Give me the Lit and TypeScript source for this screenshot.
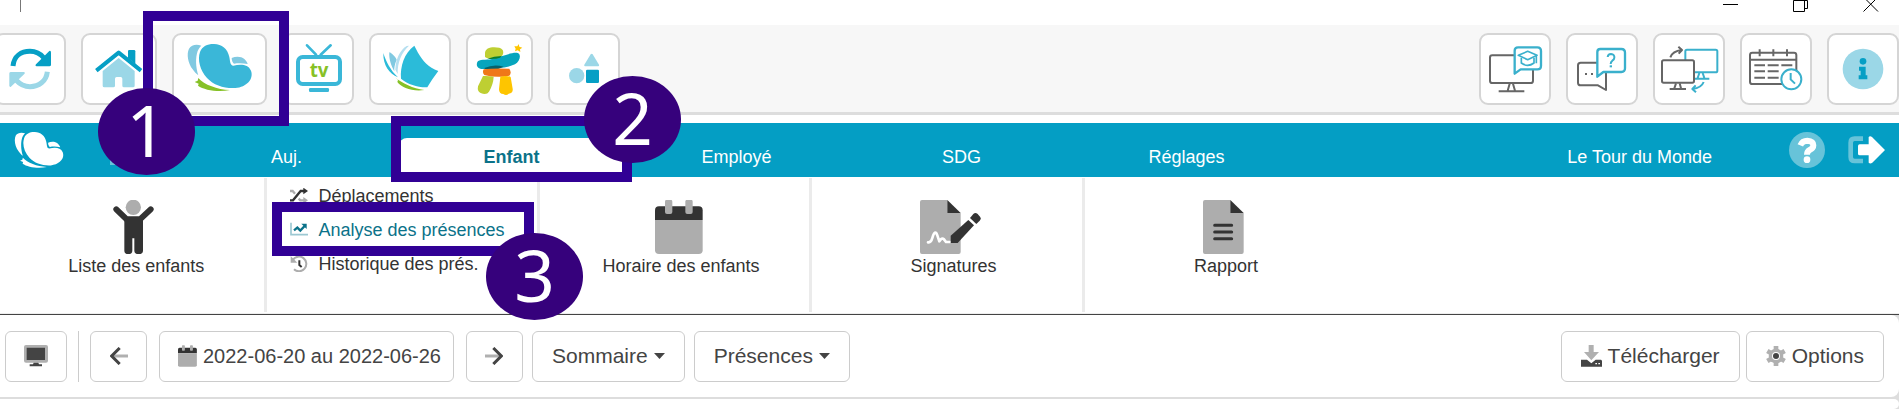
import { LitElement, html, svg, css, type TemplateResult } from "lit";
import { customElement } from "lit/decorators.js";

interface Tool {
  label: string;
  width: number;
  box: string;
  art: TemplateResult;
}

const butterfly = (left: string, body: string, small: string, tail: string) => svg`
  <path fill=${left} d="M604 137C590 132 574 134 567 146C559 162 564 189 578 208C583 215 589 222 595 226C587 202 586 173 593 153C596 146 600 141 604 137Z"/>
  <path fill=${small} d="M695 174C708 168 724 169 733 177C738 182 742 187 743 192C728 189 714 189 702 191C698 188 695 182 695 174Z"/>
  <path fill=${body} d="M640 132C664 131 683 146 688 171C691 186 690 196 700 197C722 192 744 192 753 212C762 237 740 261 706 264C674 266 641 256 621 234C600 211 592 180 600 156C607 139 622 132 640 132Z"/>
  <path fill=${tail} d="M595 234C613 254 651 269 690 270C655 278 613 270 594 257L596 251L584 246L593 242Z"/>`;

const calendarMark = svg`
  <path fill="#333" d="M226 150V121Q226 109 238 109H357Q369 109 369 121V150Z"/>
  <path fill="#adadad" d="M226 150H369V241Q369 252 357 252H238Q226 252 226 241Z"/>
  <rect x="256" y="89" width="22" height="43" rx="6" fill="#adadad"/>
  <rect x="317" y="89" width="22" height="43" rx="6" fill="#adadad"/>`;

const leftTools: Tool[] = [
  {
    label: "Actualiser", width: 72, box: "-12 105 204 204",
    art: svg`
      <path fill="none" stroke="#069fc5" stroke-width="15" d="M39 198C42 168 64 154 90 154C109 154 122 162 132 174"/>
      <path fill="#069fc5" d="M148 153Q153 151 153 158V194Q153 199 148 199H110Q104 198 108 193Z"/>
      <path fill="none" stroke="#9bd7e7" stroke-width="15" d="M142 215C139 244 116 260 90 260C70 260 58 251 48 240"/>
      <path fill="#9bd7e7" d="M32 261Q28 262 28 256V220Q28 216 33 216H71Q77 217 73 222Z"/>`,
  },
  {
    label: "Accueil", width: 76, box: "249 105 216 204",
    art: svg`
      <path fill="#069fc5" d="M384 153Q384 150 388 150H402Q406 150 406 154V192L384 174Z"/>
      <path fill="none" stroke="#069fc5" stroke-width="12" stroke-linejoin="round" d="M289 212L356 158L423 212"/>
      <path fill="#9bd7e7" d="M308 213L356 174L404 213V257Q404 262 399 262H372Q367 262 367 257V236Q367 231 362 231H350Q345 231 345 236V257Q345 262 340 262H313Q308 262 308 257Z"/>`,
  },
  {
    label: "Enfants", width: 95, box: "522 105 273 204",
    art: butterfly("#80c9e1", "#3ab7d8", "#80c9e1", "#86c127"),
  },
  {
    label: "Télé", width: 72, box: "12 105 204 204",
    art: svg`
      <path fill="none" stroke="#3ab7d8" stroke-width="8" stroke-linecap="round" d="M81 136L108 164M152 136L122 164"/>
      <rect x="54" y="171" width="126" height="81" rx="14" fill="#fff" stroke="#3ab7d8" stroke-width="12"/>
      <rect x="87" y="264" width="60" height="12" rx="4" fill="#3ab7d8"/>
      <text x="117" y="231" text-anchor="middle" class="tv">tv</text>`,
  },
  {
    label: "Journal", width: 82, box: "273 105 234 204",
    art: svg`
      <path fill="#2bbbd9" d="M403 137L414 158C427 181 445 202 475 213C461 231 451 247 442 262C412 263 385 253 363 236C360 199 373 158 403 137Z"/>
      <path fill="#b5dff0" d="M387 137C364 158 352 188 353 222L346 209C347 176 361 149 380 138Z"/>
      <path fill="#80c9e1" d="M328 157C335 159 345 169 350 179C344 193 342 205 343 214C334 198 326 177 328 157Z"/>
      <path fill="#2bbbd9" d="M310 159C317 182 331 211 354 232C328 221 309 196 310 159Z"/>
      <path fill="#86c127" d="M344 231C367 251 399 265 433 270C397 275 364 263 352 246L354 240Z"/>`,
  },
  {
    label: "Inukshuk", width: 67, box: "564 105 189 204",
    art: svg`
      <path fill="#becf32" d="M615 159C615 142 638 139 658 143C673 147 673 163 662 171C643 177 624 177 615 171Z"/>
      <path fill="#06a5bd" d="M592 186C597 177 617 181 636 177C666 170 694 156 713 159C725 163 720 185 705 193C682 204 650 204 611 207C594 208 587 198 592 186Z"/>
      <path fill="#05616a" d="M613 204Q642 191 671 200L655 207H615Z"/>
      <path fill="#087d32" d="M622 176Q642 169 665 168L660 173Q642 179 622 176Z"/>
      <path fill="#ef7719" d="M611 208Q640 204 688 206Q696 218 688 227Q650 235 613 225Q606 218 611 208Z"/>
      <path fill="#becf32" d="M609 228Q625 227 641 230Q640 253 627 275Q620 286 602 279Q591 275 594 259Z"/>
      <path fill="#fec500" d="M661 230Q680 225 692 231L698 266Q700 280 686 281Q679 288 670 282Q657 282 657 268Z"/>
      <path fill="#fec500" d="M716 132L718 140L727 143L720 148L721 156L713 151L705 154L707 146L703 139L712 139Z"/>`,
  },
  {
    label: "Activités", width: 72, box: "810 105 204 204",
    art: svg`
      <path fill="#9bd7e7" d="M932 163Q935 159 938 163L957 194Q959 199 954 199H916Q911 199 913 194Z"/>
      <circle cx="890" cy="227" r="23" fill="#9bd7e7"/>
      <rect x="918" y="209" width="39" height="40" rx="4" fill="#069fc5"/>`,
  },
];

const rightTools: Tool[] = [
  {
    label: "Formation", width: 72, box: "63 105 204 204",
    art: svg`
      <g fill="none" stroke="#666" stroke-width="6">
        <rect x="90" y="166" width="129" height="83" rx="7"/>
        <path d="M149 251L143 272M159 251L165 272M116 274H193"/>
      </g>
      <g fill="#fff" stroke="#3ab0cc" stroke-width="7" stroke-linejoin="round">
        <path d="M174 142H232Q243 142 243 153V197Q243 208 232 208H182L164 221V152Q164 142 174 142Z"/>
        <g stroke-width="5"><path d="M184 173V189Q203 203 222 189V173M229 168V190"/><path d="M175 166L203 154L231 166L203 179Z"/></g>
      </g>`,
  },
  {
    label: "Questions", width: 72, box: "324 105 204 204",
    art: svg`
      <path fill="#fff" stroke="#666" stroke-width="6" stroke-linejoin="round" d="M362 188H438V270L414 256H362Q354 256 354 248V196Q354 188 362 188Z"/>
      <path fill="#666" d="M375 219h6v6h-6zM393 219h6v6h-6z"/>
      <path fill="#fff" stroke="#3ab0cc" stroke-width="7" stroke-linejoin="round" d="M421 147H484Q495 147 495 158V205Q495 216 484 216H430L412 230V156Q412 147 421 147Z"/>
      <path fill="none" stroke="#3ab0cc" stroke-width="6" d="M443 171Q444 162 453 162Q464 163 463 173Q463 178 457 182Q452 186 452 192"/>
      <rect x="449" y="196" width="7" height="6" fill="#3ab0cc"/>`,
  },
  {
    label: "Prise en main à distance", width: 72, box: "585 105 204 204",
    art: svg`
      <g fill="none" stroke="#3ab0cc" stroke-width="6" stroke-linejoin="round">
        <rect x="676" y="149" width="96" height="68" rx="5"/>
        <path d="M718 219L713 234M728 219L733 234M702 236H748"/>
        <path d="M731 246Q724 264 698 267M707 256L697 267L708 277"/>
      </g>
      <g fill="none" stroke="#666" stroke-width="6" stroke-linejoin="round">
        <rect x="606" y="181" width="96" height="67" rx="5" fill="#fff"/>
        <path d="M648 250L643 265M659 250L663 265M629 267H678"/>
        <path d="M631 172Q638 153 665 150M655 140L666 150L656 161"/>
      </g>`,
  },
  {
    label: "Horaire", width: 72, box: "846 105 204 204",
    art: svg`
      <g fill="none" stroke="#666" stroke-width="6">
        <rect x="870" y="158" width="139" height="94" rx="7"/>
        <path d="M871 179H1009M899 148V169M940 148V169M981 148V169"/>
        <path d="M883 196H915M923 196H956M964 196H997M883 214H915M923 214H956M883 233H915M923 233H956"/>
      </g>
      <circle cx="994" cy="238" r="30" fill="#fff" stroke="#3ab0cc" stroke-width="6"/>
      <path fill="none" stroke="#3ab0cc" stroke-width="6" d="M992 219V238L1005 251"/>`,
  },
  {
    label: "Information", width: 72, box: "1107 105 204 204",
    art: svg`
      <circle cx="1209" cy="207" r="61" fill="#9bd7e7"/>
      <circle cx="1209" cy="184" r="10" fill="#069fc5"/>
      <path fill="#069fc5" d="M1197 200H1217V226H1222V238H1196V226H1202V212H1197Z"/>`,
  },
];

const page = svg`
  <path fill="#adadad" d="M6 0H82V39H122V156Q122 162 116 162H6Q0 162 0 156V6Q0 0 6 0Z"/>
  <path fill="#333" d="M82 0L122 39H82Z"/>`;

const person = svg`
  <circle cx="402" cy="112" r="23" fill="#adadad"/>
  <path fill="none" stroke="#333" stroke-width="18" stroke-linecap="round" stroke-linejoin="round" d="M351 118L382 148H422L454 118"/>
  <path fill="#333" d="M375 141H431V242Q431 252 418 252Q405 252 405 242V205H399V242Q399 252 387 252Q375 252 375 242Z"/>`;

const shuffle = svg`
  <path fill="none" stroke="#adadad" stroke-width="7" d="M0 9H8L15 17M26 32L31 37H42"/>
  <path fill="#adadad" d="M40 27L54 37L40 47Z"/>
  <path fill="none" stroke="#333" stroke-width="7" d="M0 37H9L32 9H42"/>
  <path fill="#333" d="M40 -1L54 9L40 19Z"/>`;

const chart = svg`
  <path fill="none" stroke="#9cc8d2" stroke-width="5" d="M3 2V38H54"/>
  <path fill="none" stroke="#0b7289" stroke-width="7" d="M12 25L22 17L31 26L44 12"/>
  <path fill="#0b7289" d="M34 5H50V21Z"/>`;

const historyMark = svg`
  <path fill="none" stroke="#adadad" stroke-width="6" d="M9 11A22 22 0 1 1 12 40"/>
  <path fill="#adadad" d="M2 0V20H22Z"/>
  <path fill="none" stroke="#333" stroke-width="6" d="M28 13V27L35 33"/>`;

const caret = html`<svg class="caret" viewBox="0 0 11 6" aria-hidden="true"><path fill="#444" d="M0 0H11L5.5 6Z"/></svg>`;

@customElement("app-root")
export class AppRoot extends LitElement {
  static styles = css`
    :host {
      display: block;
      position: relative;
      overflow: hidden;
      background: #fff;
      color: #333;
      font-family: "Liberation Sans", Arial, sans-serif;
      font-size: 18px;
    }
    * { box-sizing: border-box; }
    svg { display: block; flex: none; }
    a { color: inherit; text-decoration: none; }
    button { font: inherit; color: inherit; background: #fff; cursor: pointer; padding: 0; margin: 0; }

    .titlebar { display: flex; height: 25px; padding-left: 20px; padding-right: 20px; align-items: flex-start; }
    .cursor { width: 1px; height: 12px; background: #777; }
    .window-actions { display: flex; gap: 54px; margin-left: auto; }
    .window-actions button { border: 0; width: 16px; height: 13px; }

    .tools { display: flex; justify-content: space-between; height: 90px; padding-top: 8px; background: #f7f7f7; border-bottom: 3px solid #ddd; }
    .group { display: flex; gap: 15px; }
    .group.start { margin-left: -6px; }
    .tool { height: 72px; border: 2px solid #d5d5d5; border-radius: 9px; overflow: hidden; }
    .tv { font: bold 56px "Open Sans", sans-serif; fill: #86c127; }

    .nav { display: flex; align-items: flex-end; height: 54px; margin-top: 8px; background: #049ec4; color: #fff; }
    .logo { align-self: center; width: 64px; padding-left: 14px; }
    .tab { width: 225px; line-height: 38px; height: 39px; text-align: center; border-radius: 8px 8px 0 0; }
    .tab.home { width: 110px; display: flex; justify-content: center; padding-top: 10px; }
    .tab.active { background: #fff; color: #0b7289; font-weight: bold; }
    .site { margin-left: auto; margin-right: 77px; line-height: 38px; height: 39px; }
    .nav-actions { align-self: center; display: flex; align-items: center; gap: 23px; padding-right: 14px; }

    .ribbon { display: grid; grid-template-columns: repeat(7, 1fr); margin-right: -8px; height: 137px; padding-top: 1px; padding-bottom: 1px; border-bottom: 1px solid #eee; }
    .cell { margin-right: 5px; padding-left: 8px; border-right: 3px solid #ebebeb; display: flex; flex-direction: column; }
    .cell:last-child { border-right-color: transparent; }
    .big { display: flex; flex-direction: column; align-items: center; gap: 2px; padding-top: 22px; line-height: 20px; }
    .big svg { margin-right: 5px; }
    .entry { display: flex; align-items: center; gap: 9px; height: 34px; padding-left: 10px; }
    .entries { padding-top: 1px; }
    .entry.current { color: #0b7289; }

    .panels { background: #ddd; border-top: 1px solid #444; }
    .panel { background: #fff; border-radius: 0 8px 8px 0; }
    .bar { display: flex; align-items: center; height: 82px; margin-bottom: 2px; padding: 0 15px 0 5px; font-size: 20px; color: #444; }
    .btn { display: flex; align-items: center; justify-content: center; gap: 6px; height: 51px; border: 1px solid #ccc; border-radius: 6px; padding: 0 19px; }
    .btn.square { width: 57px; padding: 0; }
    .btn.screen { width: 62px; padding: 0; }
    .btn.menu { font-size: 21px; }
    .rule { width: 1px; height: 51px; background: #ccc; margin: 0 11px; }
    .btn.dates { margin: 0 12px; padding: 0 12px 0 18px; }
    .menus { display: flex; gap: 9px; margin-left: 9px; }
    .exports { display: flex; gap: 6px; margin-left: auto; }
    .caret { width: 11px; height: 6px; }
    .content { height: 10px; }

    .frame { position: absolute; border: 10px solid #310095; pointer-events: none; }
    .frame.one { left: 143px; top: 11px; width: 146px; height: 115px; }
    .frame.two { left: 391px; top: 116px; width: 241px; height: 66px; }
    .frame.three { left: 272px; top: 202px; width: 262px; height: 54px; }
    .step { position: absolute; width: 97px; height: 87px; border-radius: 50%; background: #36017c; color: #fff; font: 71px/84px "Noto Sans", sans-serif; text-align: center; pointer-events: none; }
    .step.one { left: 98px; top: 88px; }
    .step.two { left: 584px; top: 76px; }
    .step.three { left: 486px; top: 233px; }
  `;

  private tool(t: Tool) {
    return html`<button class="tool" aria-label=${t.label}>
      <svg width=${t.width - 4} height="68" viewBox=${t.box} aria-hidden="true">${t.art}</svg>
    </button>`;
  }

  private entry(label: string, art: TemplateResult, current = false) {
    return html`<a href="#" class="entry ${current ? "current" : ""}">
      <svg width="19" height="16" viewBox="0 0 57 48" aria-hidden="true">${art}</svg>${label}</a>`;
  }

  render() {
    return html`
      <header class="titlebar">
        <span class="cursor"></span>
        <div class="window-actions">
          <button aria-label="Réduire"><svg width="16" height="13" viewBox="0 0 16 13"><path d="M0 4.5H15" stroke="#000"/></svg></button>
          <button aria-label="Agrandir"><svg width="16" height="13" viewBox="0 0 16 13"><path d="M.5 .5H11.500V11.500H.5ZM3 .5H14.500V8.500H12" fill="none" stroke="#000"/></svg></button>
          <button aria-label="Fermer"><svg width="16" height="13" viewBox="0 0 16 13"><path d="M.5 -3L15 11.500M15 -3L.5 11.500" stroke="#000"/></svg></button>
        </div>
      </header>

      <div class="tools">
        <div class="group start">${leftTools.map((t) => this.tool(t))}</div>
        <div class="group">${rightTools.map((t) => this.tool(t))}</div>
      </div>

      <nav class="nav">
        <a href="#" class="logo" aria-label="Accueil du site">
          <svg width="50" height="38" viewBox="560 130 198 146" aria-hidden="true">${butterfly("#fff", "#fff", "#fff", "#fff")}</svg>
        </a>
        <a href="#" class="tab home" aria-label="Accueil">
          <svg width="20" height="17" viewBox="0 0 20 17" aria-hidden="true"><path fill="#67c3d9" d="M10 0L18 8V17H12V11H8V17H1V10Z"/></svg>
        </a>
        <a href="#" class="tab">Auj.</a>
        <a href="#" class="tab active" aria-current="page">Enfant</a>
        <a href="#" class="tab">Employé</a>
        <a href="#" class="tab">SDG</a>
        <a href="#" class="tab">Réglages</a>
        <span class="site">Le Tour du Monde</span>
        <div class="nav-actions">
          <a href="#" aria-label="Aide">
            <svg width="36" height="36" viewBox="987 395 108 108" aria-hidden="true">
              <circle cx="1041" cy="449" r="54" fill="#67c3d9"/>
              <path fill="none" stroke="#fff" stroke-width="18" d="M1021 435Q1027 421 1042 421Q1060 422 1060 435Q1060 444 1049 449Q1041 453 1041 463"/>
              <circle cx="1041" cy="478" r="10" fill="#fff"/>
            </svg>
          </a>
          <a href="#" aria-label="Quitter">
            <svg width="37" height="28" viewBox="1164 407 111 84" aria-hidden="true">
              <path fill="none" stroke="#67c3d9" stroke-width="14" d="M1209 415H1184Q1172 415 1172 427V470Q1172 482 1184 482H1209"/>
              <path fill="#fff" d="M1199 432H1226V410Q1230 405 1236 410L1275 449L1236 488Q1230 491 1226 487V465H1199Q1194 465 1194 460V437Q1194 432 1199 432Z"/>
            </svg>
          </a>
        </div>
      </nav>

      <section class="ribbon">
        <div class="cell">
          <a href="#" class="big"><svg width="41" height="54" viewBox="341 90 123 162" aria-hidden="true">${person}</svg>Liste des enfants</a>
        </div>
        <div class="cell entries">
          ${this.entry("Déplacements", shuffle)}
          ${this.entry("Analyse des présences", chart, true)}
          ${this.entry("Historique des prés.", historyMark)}
        </div>
        <div class="cell">
          <a href="#" class="big"><svg width="48" height="54" viewBox="226 90 144 162" aria-hidden="true">${calendarMark}</svg>Horaire des enfants</a>
        </div>
        <div class="cell">
          <a href="#" class="big"><svg width="61" height="54" viewBox="0 0 183 162" aria-hidden="true">
            ${page}
            <path fill="none" stroke="#fff" stroke-width="8" stroke-linecap="round" stroke-linejoin="round" d="M24 127Q33 129 37 114Q45 86 52 106L58 124Q65 112 72 118L78 126H90"/>
            <path fill="#333" d="M92 129V107L145 60L162 76L113 129Z"/>
            <path fill="#333" d="M150 54L160 42Q166 36 173 42L180 50Q185 56 179 62L169 72Z"/>
          </svg>Signatures</a>
        </div>
        <div class="cell">
          <a href="#" class="big"><svg width="41" height="54" viewBox="0 0 123 162" aria-hidden="true">
            ${page}
            <path stroke="#333" stroke-width="9" stroke-linecap="round" d="M35 76H86M35 96H86M35 116H86"/>
          </svg>Rapport</a>
        </div>
      </section>

      <main class="panels">
        <section class="panel bar">
          <button class="btn screen" aria-label="Écran">
            <svg width="24" height="22" viewBox="0 0 72 66" aria-hidden="true"><rect width="72" height="53" rx="6" fill="#b0b0b0"/><path fill="#444" d="M8 8H63V45H8ZM29 53H43L45 58H54V64H17V58H27Z"/></svg>
          </button>
          <span class="rule"></span>
          <button class="btn square" aria-label="Semaine précédente">
            <svg width="18" height="18" viewBox="0 0 54 54" aria-hidden="true"><path stroke="#b0b0b0" stroke-width="9" d="M8 27H54"/><path fill="none" stroke="#444" stroke-width="9" d="M29 3L5 27L29 51"/></svg>
          </button>
          <button class="btn dates">
            <svg width="19" height="22" viewBox="226 88 144 166" aria-hidden="true">${calendarMark}</svg>2022-06-20 au 2022-06-26
          </button>
          <button class="btn square" aria-label="Semaine suivante">
            <svg width="18" height="18" viewBox="0 0 54 54" aria-hidden="true"><path stroke="#b0b0b0" stroke-width="9" d="M0 27H46"/><path fill="none" stroke="#444" stroke-width="9" d="M25 3L49 27L25 51"/></svg>
          </button>
          <div class="menus">
            <button class="btn menu" aria-haspopup="menu">Sommaire${caret}</button>
            <button class="btn menu" aria-haspopup="menu">Présences${caret}</button>
          </div>
          <div class="exports">
            <button class="btn menu">
              <svg width="21" height="22" viewBox="0 0 63 66" aria-hidden="true"><path fill="#444" d="M0 44H18L31 55L44 44H60L63 47V65H0Z"/><path fill="#fff" d="M43 54h5v4h-5zM52 54h5v4h-5z"/><path fill="#b0b0b0" d="M23 0H38V21H54L31 46L9 21H23Z"/></svg>Télécharger
            </button>
            <button class="btn menu">
              <svg width="20" height="20" viewBox="-30 -30 60 60" aria-hidden="true">
                <circle r="22" fill="#b0b0b0"/>
                <path stroke="#b0b0b0" stroke-width="14" d="M0 -30V30M-26 -15L26 15M-26 15L26 -15"/>
                <circle r="12" fill="#fff"/><circle r="9" fill="#444"/>
              </svg>Options
            </button>
          </div>
        </section>
        <section class="panel content"></section>
      </main>

      <div class="frame one"></div>
      <div class="frame two"></div>
      <div class="frame three"></div>
      <div class="step one">1</div>
      <div class="step two">2</div>
      <div class="step three">3</div>
    `;
  }
}
